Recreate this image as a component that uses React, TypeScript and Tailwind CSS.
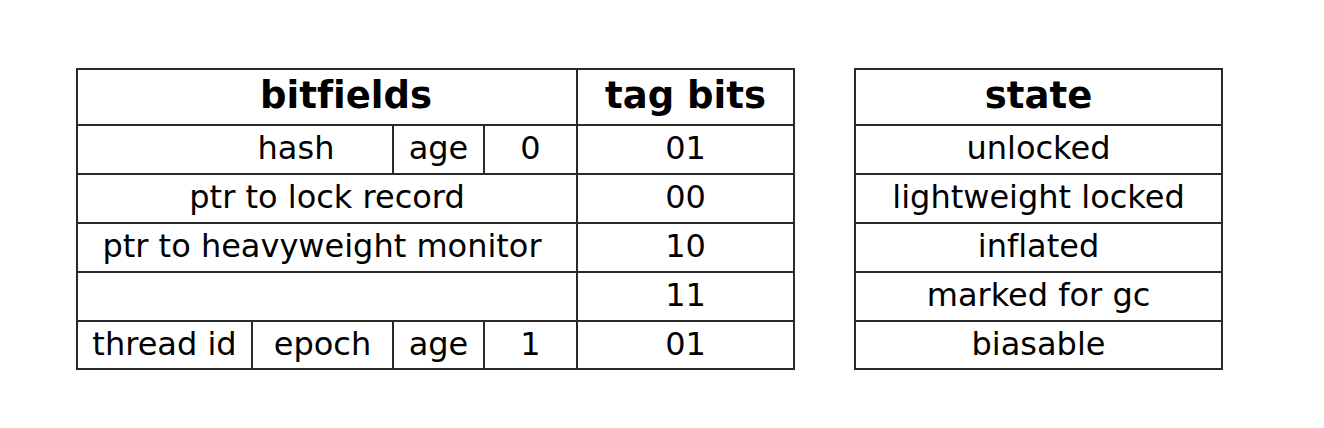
const cell = 'bg-white flex items-center justify-center pb-[3px] text-[32px] text-black leading-none whitespace-nowrap';
const head = 'bg-white flex items-center justify-center pb-[4px] text-[37px] font-bold text-black leading-none whitespace-nowrap';

const states = ['unlocked', 'lightweight locked', 'inflated', 'marked for gc', 'biasable'];

export default function App() {
  return (
    <div
      className="w-[1324px] h-[428px] bg-white flex items-start gap-[59px] pt-[68px] pl-[76px] [font-variant-ligatures:none]"
      style={{ fontFamily: '"DejaVu Sans", Verdana, sans-serif' }}
    >
      {/* mark word layout */}
      <div className="grid grid-cols-[173px_139px_89px_91px_215px] grid-rows-[54px_47px_47px_47px_47px_46px] gap-[2px] p-[2px] bg-[#2a2a2a]">
        <div className={`${head} col-span-4 pl-[38px]`}>bitfields</div>
        <div className={head}>tag bits</div>

        <div className={`${cell} col-span-2 pl-[122px]`}>hash</div>
        <div className={cell}>age</div>
        <div className={cell}>0</div>
        <div className={cell}>01</div>

        <div className={`${cell} col-span-4`}>ptr to lock record</div>
        <div className={cell}>00</div>

        <div className={`${cell} col-span-4 pr-[10px]`}>ptr to heavyweight monitor</div>
        <div className={cell}>10</div>

        <div className={`${cell} col-span-4`}></div>
        <div className={cell}>11</div>

        <div className={cell}>thread id</div>
        <div className={cell}>epoch</div>
        <div className={cell}>age</div>
        <div className={cell}>1</div>
        <div className={cell}>01</div>
      </div>

      {/* state column */}
      <div className="grid grid-cols-[365px] grid-rows-[54px_47px_47px_47px_47px_46px] gap-[2px] p-[2px] bg-[#2a2a2a]">
        <div className={head}>state</div>
        {states.map((s) => (
          <div key={s} className={cell}>{s}</div>
        ))}
      </div>
    </div>
  );
}
